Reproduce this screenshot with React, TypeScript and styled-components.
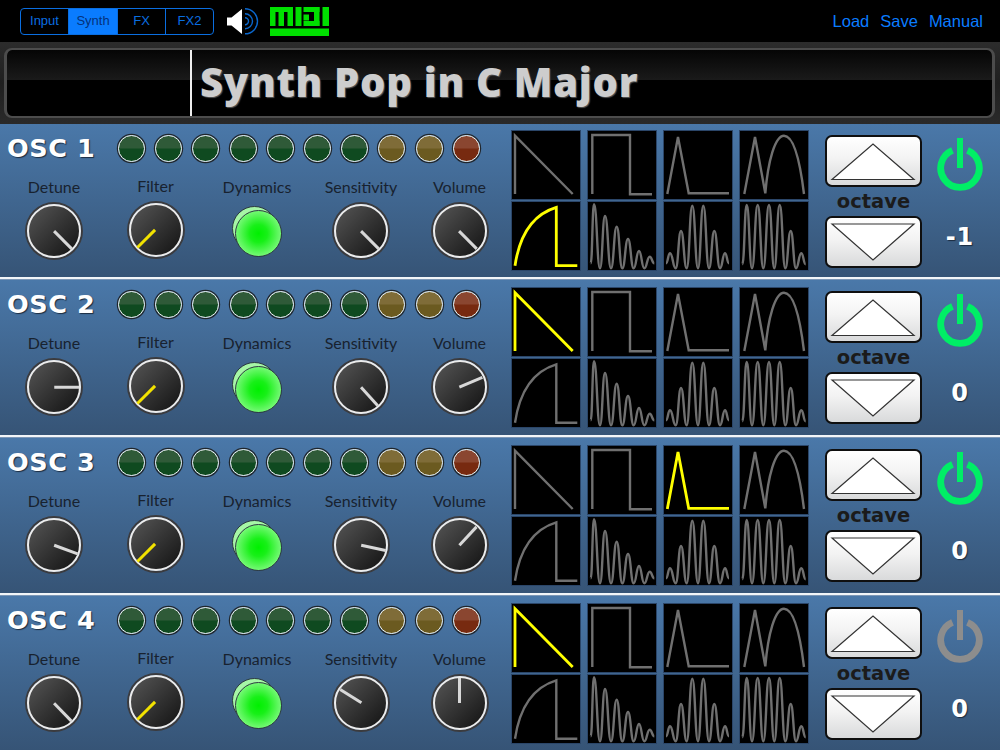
import React from 'react';
import styled, { createGlobalStyle } from 'styled-components';

const Global = createGlobalStyle`
  html, body { margin: 0; padding: 0; background: #000; }
  body { width: 1000px; height: 750px; overflow: hidden; font-family: "Liberation Sans", Arial, sans-serif; }
  * { box-sizing: border-box; }
`;

const Page = styled.main`
  width: 1000px;
  height: 750px;
  display: flex;
  flex-direction: column;
  background: #000;
  overflow: hidden;
`;

const TopBar = styled.header`
  height: 42px;
  flex: none;
  display: flex;
  align-items: flex-start;
  padding: 8px 17px 0 20px;
`;

const Segments = styled.nav`
  display: flex;
  width: 194px;
  height: 27px;
  border: 1px solid #0a6ee0;
  border-radius: 4px;
  overflow: hidden;
`;

const Segment = styled.button<{ $active?: boolean; $w: number }>`
  width: ${p => p.$w}px;
  height: 100%;
  padding: 0 0 2px;
  border: 0;
  border-right: 1px solid #0a6ee0;
  background: ${p => (p.$active ? '#0a7cff' : 'transparent')};
  color: ${p => (p.$active ? '#04327c' : '#0a6ee0')};
  font: 13px "Liberation Sans", Arial, sans-serif;
  &:last-child { border-right: 0; }
`;

const Speaker = styled.svg`
  width: 34px;
  height: 28px;
  margin-left: 13px;
  flex: none;
`;

const MidiLogo = styled.svg`
  width: 59px;
  height: 29px;
  margin: -1px 0 0 9px;
  flex: none;
`;

const Links = styled.div`
  margin-left: auto;
  display: flex;
  gap: 11px;
  color: #0a7cff;
  font-size: 16.5px;
  line-height: 27px;
`;

const Display = styled.section`
  height: 82px;
  flex: none;
  padding: 6px 5px 5px 4px;
  background: linear-gradient(#2c2c2c, #1f1f1f 50%, #2a2a2a);
`;

const DisplayInner = styled.div`
  height: 70px;
  display: flex;
  border: 2px solid #4c4c4c;
  border-left-width: 3px;
  border-right-width: 3px;
  border-radius: 8px;
  background: linear-gradient(#050505, #1a1a1a 45%, #000 45%);
  overflow: hidden;
`;

const Caret = styled.div`
  width: 185px;
  flex: none;
  border-right: 2px solid #eee;
`;

const PatchName = styled.h1`
  margin: 0 0 0 8px;
  font: 800 40px/64px "Open Sans", Lato, sans-serif;
  letter-spacing: 0.7px;
  color: #cdcdcd;
  text-shadow: 1px 1px 1px #555;
  white-space: nowrap;
`;

const Rack = styled.div`
  display: flex;
  flex-direction: column;
`;

const Osc = styled.section<{ $h: number }>`
  height: ${p => p.$h}px;
  flex: none;
  display: flex;
  align-items: flex-start;
  background: linear-gradient(#4a78a9, #365476);
`;

const Separator = styled.div`
  height: 3px;
  flex: none;
  background: linear-gradient(#f2f5f8 0, #f2f5f8 66%, #7d97b6 66%);
`;

const Left = styled.div`
  width: 512px;
  flex: none;
`;

const TitleRow = styled.div`
  height: 48px;
  display: flex;
  align-items: center;
`;

const OscTitle = styled.h2`
  width: 118px;
  flex: none;
  margin: 0;
  padding-left: 7px;
  font: 700 25.5px/48px "DejaVu Sans", Verdana, sans-serif;
  letter-spacing: 0.6px;
  color: #fff;
  text-shadow: 1px 1px 1px #1c2c40;
  white-space: nowrap;
`;

const Leds = styled.div`
  display: flex;
  gap: 10.2px;
`;

const Led = styled.span<{ $hi: string; $lo: string }>`
  width: 27px;
  height: 27px;
  flex: none;
  border-radius: 50%;
  border: 1.5px solid #eef2ee;
  box-shadow: 0 0 0 1.2px #20262c;
  background: linear-gradient(${p => p.$hi}, ${p => p.$hi} 46%, ${p => p.$lo} 54%, ${p => p.$lo});
`;

const Controls = styled.div`
  display: grid;
  grid-template-columns: 108px 95px 112px 92px 105px;
`;

const Control = styled.div<{ $raised?: boolean }>`
  display: flex;
  flex-direction: column;
  align-items: center;
  margin-top: ${p => (p.$raised ? 3 : 4)}px;
`;

const Label = styled.span<{ $nudge?: number }>`
  height: 22px;
  margin-right: ${p => p.$nudge ?? 0}px;
  font: 400 16px/22px Lato, sans-serif;
  color: #18222f;
  white-space: nowrap;
`;

const Knob = styled.div`
  position: relative;
  width: 54px;
  height: 54px;
  margin-top: 6px;
  border-radius: 50%;
  border: 2px solid #ececec;
  box-shadow: 0 0 0 2px #3b3b3e;
  background: linear-gradient(135deg, #565656, #1c1c1c 85%);
`;

const Pointer = styled.i<{ $angle: number; $color: string }>`
  position: absolute;
  left: 50%;
  bottom: 50%;
  width: 2.5px;
  height: 25px;
  margin-left: -1.25px;
  background: ${p => p.$color};
  transform-origin: 50% 100%;
  transform: rotate(${p => p.$angle}deg);
`;

const Dynamics = styled.div`
  position: relative;
  width: 54px;
  height: 54px;
  margin-top: 6px;
`;

const DynamicsBack = styled.span`
  position: absolute;
  left: 0;
  top: 1.5px;
  width: 45px;
  height: 45px;
  border-radius: 50%;
  background: #a6f6a6;
  border: 1.5px solid #2c3a40;
`;

const DynamicsFront = styled.span`
  position: absolute;
  left: 2.5px;
  top: 5.5px;
  width: 47px;
  height: 47px;
  border-radius: 50%;
  border: 1.5px solid #2c3a40;
  background: radial-gradient(circle, #00f000 0, #18f018 28%, #b4ffb4 100%);
`;

const Waves = styled.div<{ $top: number }>`
  width: 296px;
  flex: none;
  margin-top: ${p => p.$top}px;
  display: grid;
  grid-template-columns: repeat(4, 68px);
  grid-auto-rows: 68px;
  column-gap: 8px;
  row-gap: 3px;
`;

const WaveCell = styled.svg`
  display: block;
  width: 68px;
  height: 68px;
  background: #000;
  outline: 1px solid #2b4669;
`;

const WavePath = styled.path<{ $on?: boolean }>`
  fill: none;
  stroke: ${p => (p.$on ? '#ffff00' : '#707070')};
  stroke-width: ${p => (p.$on ? 2.8 : 2.4)};
  stroke-linejoin: miter;
`;

const Octave = styled.div`
  width: 97px;
  flex: none;
  margin: 11px 0 0 17px;
  display: flex;
  flex-direction: column;
  align-items: stretch;
`;

const OctaveButton = styled.button`
  height: 52px;
  padding: 0;
  border: 2.5px solid #0f0f0f;
  border-radius: 7px;
  background: linear-gradient(#fff, #f3f3f3 45%, #d9dadb);
  display: block;
`;

const Arrow = styled.svg`
  display: block;
  width: 92px;
  height: 47px;
`;

const OctaveLabel = styled.div`
  height: 29px;
  text-align: center;
  font: 700 19.5px/30px "DejaVu Sans", Verdana, sans-serif;
  color: #1b1b1b;
`;

const PowerColumn = styled.div`
  width: 76px;
  flex: none;
  display: flex;
  flex-direction: column;
  align-items: center;
  padding-top: 14px;
`;

const PowerIcon = styled.svg<{ $on: boolean }>`
  display: block;
  width: 48px;
  height: 54px;
  color: ${p => (p.$on ? '#00ee66' : '#8d8d8d')};
`;

const OctaveValue = styled.div`
  margin-top: 30px;
  height: 30px;
  font: 700 24px/30px "DejaVu Sans", Verdana, sans-serif;
  color: #fff;
  letter-spacing: 1px;
  text-shadow: 1px 1px 1px #1c2c40;
`;

type Pt = [number, number];
const smooth = (pts: Pt[]) => {
  let d = `M${pts[0][0]} ${pts[0][1]}`;
  for (let i = 1; i < pts.length; i++) {
    const [x0, y0] = pts[i - 1];
    const [x1, y1] = pts[i];
    const m = (x0 + x1) / 2;
    d += ` C${m} ${y0} ${m} ${y1} ${x1} ${y1}`;
  }
  return d;
};

const WAVE_PATHS: string[] = [
  'M3 63 L3 4.7 L60.7 63',
  'M4.3 63 L4.3 4 L42 4 L42 63.3 L64 63.3',
  'M3.3 63 L14 6 L24.7 62.3 L65 62.3',
  'M4.3 63 L15 6 L25.3 62.3 C28 30 35 4.7 44 4.7 C54 4.7 60 30 64 63',
  'M3 63.7 C8 30 22 12 44.3 5.3 L44.3 63.7 L65.3 63.7',
  smooth([[2.7, 61.3], [6, 2.3], [12, 66.3], [17, 14], [23, 66.3], [28.7, 24.7], [34.3, 66.3], [40, 37], [45.7, 66.3], [51, 49], [56.3, 66.3], [61.7, 54.7], [66.3, 61.3]]),
  smooth([[2, 61.3], [6, 51.3], [11.7, 66.3], [17, 29], [22.7, 66.3], [28.3, 3.7], [34, 66.3], [39.3, 3.7], [45, 66.3], [50.3, 29], [56, 66.3], [61, 51.3], [65, 61.3]]),
  smooth([[2.3, 62.3], [6.7, 3], [12, 66.3], [17.7, 3], [23.3, 66.3], [29, 3], [34.3, 66.3], [39.7, 3], [45.3, 66.3], [50.7, 29], [56, 66.3], [61.3, 51.3], [65.7, 62.3]]),
];

const LEDS: [string, string][] = [
  ...Array(7).fill(['#2f5a38', '#0f4a20']),
  ['#7f6c38', '#6b5a20'],
  ['#7f6c38', '#6b5a20'],
  ['#8a4630', '#772a10'],
];

const OSCS = [
  { name: 'OSC 1', h: 153, sep: true, top: 7, wave: 4, value: '-1', on: true, knobs: [135, 135, 135] },
  { name: 'OSC 2', h: 155, sep: true, top: 8, wave: 0, value: '0', on: true, knobs: [90, 138, 67] },
  { name: 'OSC 3', h: 155, sep: true, top: 8, wave: 2, value: '0', on: true, knobs: [110, 102, 43] },
  { name: 'OSC 4', h: 154, sep: false, top: 8, wave: 0, value: '0', on: false, knobs: [136, 302, 0] },
];

const Dial = ({ label, angle, yellow, raised }: { label: string; angle: number; yellow?: boolean; raised?: boolean }) => (
  <Control $raised={raised}>
    <Label>{label}</Label>
    <Knob>
      <Pointer $angle={angle} $color={yellow ? '#f2e200' : '#d8d8d8'} />
    </Knob>
  </Control>
);

const Power = ({ on }: { on: boolean }) => (
  <PowerIcon $on={on} viewBox="0 0 48 54">
    <path d="M16.5 12.3 A19.3 19.3 0 1 0 31.5 12.3" fill="none" stroke="currentColor" strokeWidth="6.8" />
    <rect x="21" y="0" width="6" height="30" fill="currentColor" />
  </PowerIcon>
);

export default function App() {
  return (
    <Page>
      <Global />
      <TopBar>
        <Segments>
          <Segment $w={48}>Input</Segment>
          <Segment $w={49} $active>Synth</Segment>
          <Segment $w={48}>FX</Segment>
          <Segment $w={47}>FX2</Segment>
        </Segments>
        <Speaker viewBox="0 0 34 28">
          <path d="M0 9.5 H4.5 L15 1 V26 L4.5 17.5 H0 Z" fill="#fff" />
          <g fill="none" stroke="#0a66cc" strokeWidth="1.4">
            <path d="M18 9.8 A3.5 3.5 0 0 1 18 16.8" />
            <path d="M18 5.8 A7.5 7.5 0 0 1 18 20.8" />
            <path d="M18 0.8 A12.5 12.5 0 0 1 18 25.8" />
          </g>
        </Speaker>
        <MidiLogo viewBox="0 0 59 29" fill="#00e000">
          <rect x="0" y="0" width="23" height="5" />
          <rect x="0" y="0" width="5.5" height="19" />
          <rect x="8.5" y="0" width="5.5" height="19" />
          <rect x="17.5" y="0" width="5.5" height="19" />
          <rect x="25.5" y="0" width="6" height="19" />
          <rect x="33.5" y="0" width="16" height="5" />
          <rect x="44" y="0" width="5.5" height="19" />
          <rect x="33.5" y="14" width="16" height="5" />
          <rect x="33.5" y="7.5" width="5.5" height="6" />
          <rect x="52.5" y="0" width="6.5" height="19" />
          <rect x="0" y="21.5" width="59" height="7.5" />
        </MidiLogo>
        <Links>
          <span>Load</span>
          <span>Save</span>
          <span>Manual</span>
        </Links>
      </TopBar>
      <Display>
        <DisplayInner>
          <Caret />
          <PatchName>Synth Pop in C Major</PatchName>
        </DisplayInner>
      </Display>
      <Rack>
        {OSCS.map(o => (
          <React.Fragment key={o.name}>
            <Osc $h={o.h}>
              <Left>
                <TitleRow>
                  <OscTitle>{o.name}</OscTitle>
                  <Leds>
                    {LEDS.map(([hi, lo], i) => (
                      <Led key={i} $hi={hi} $lo={lo} />
                    ))}
                  </Leds>
                </TitleRow>
                <Controls>
                  <Dial label="Detune" angle={o.knobs[0]} />
                  <Dial label="Filter" angle={225} yellow raised />
                  <Control>
                    <Label $nudge={4}>Dynamics</Label>
                    <Dynamics>
                      <DynamicsBack />
                      <DynamicsFront />
                    </Dynamics>
                  </Control>
                  <Dial label="Sensitivity" angle={o.knobs[1]} />
                  <Dial label="Volume" angle={o.knobs[2]} />
                </Controls>
              </Left>
              <Waves $top={o.top}>
                {WAVE_PATHS.map((d, i) => (
                  <WaveCell key={i} viewBox="0 0 68 68">
                    <WavePath d={d} $on={i === o.wave} />
                  </WaveCell>
                ))}
              </Waves>
              <Octave>
                <OctaveButton aria-label="octave up">
                  <Arrow viewBox="0 0 92 47">
                    <path d="M5 41.5 L46 6 L87 41.5 Z" fill="#fff" stroke="#333" strokeWidth="1.2" />
                  </Arrow>
                </OctaveButton>
                <OctaveLabel>octave</OctaveLabel>
                <OctaveButton aria-label="octave down">
                  <Arrow viewBox="0 0 92 47">
                    <path d="M5 5 L46 41 L87 5 Z" fill="#fff" stroke="#333" strokeWidth="1.2" />
                  </Arrow>
                </OctaveButton>
              </Octave>
              <PowerColumn>
                <Power on={o.on} />
                <OctaveValue>{o.value}</OctaveValue>
              </PowerColumn>
            </Osc>
            {o.sep && <Separator />}
          </React.Fragment>
        ))}
      </Rack>
    </Page>
  );
}
